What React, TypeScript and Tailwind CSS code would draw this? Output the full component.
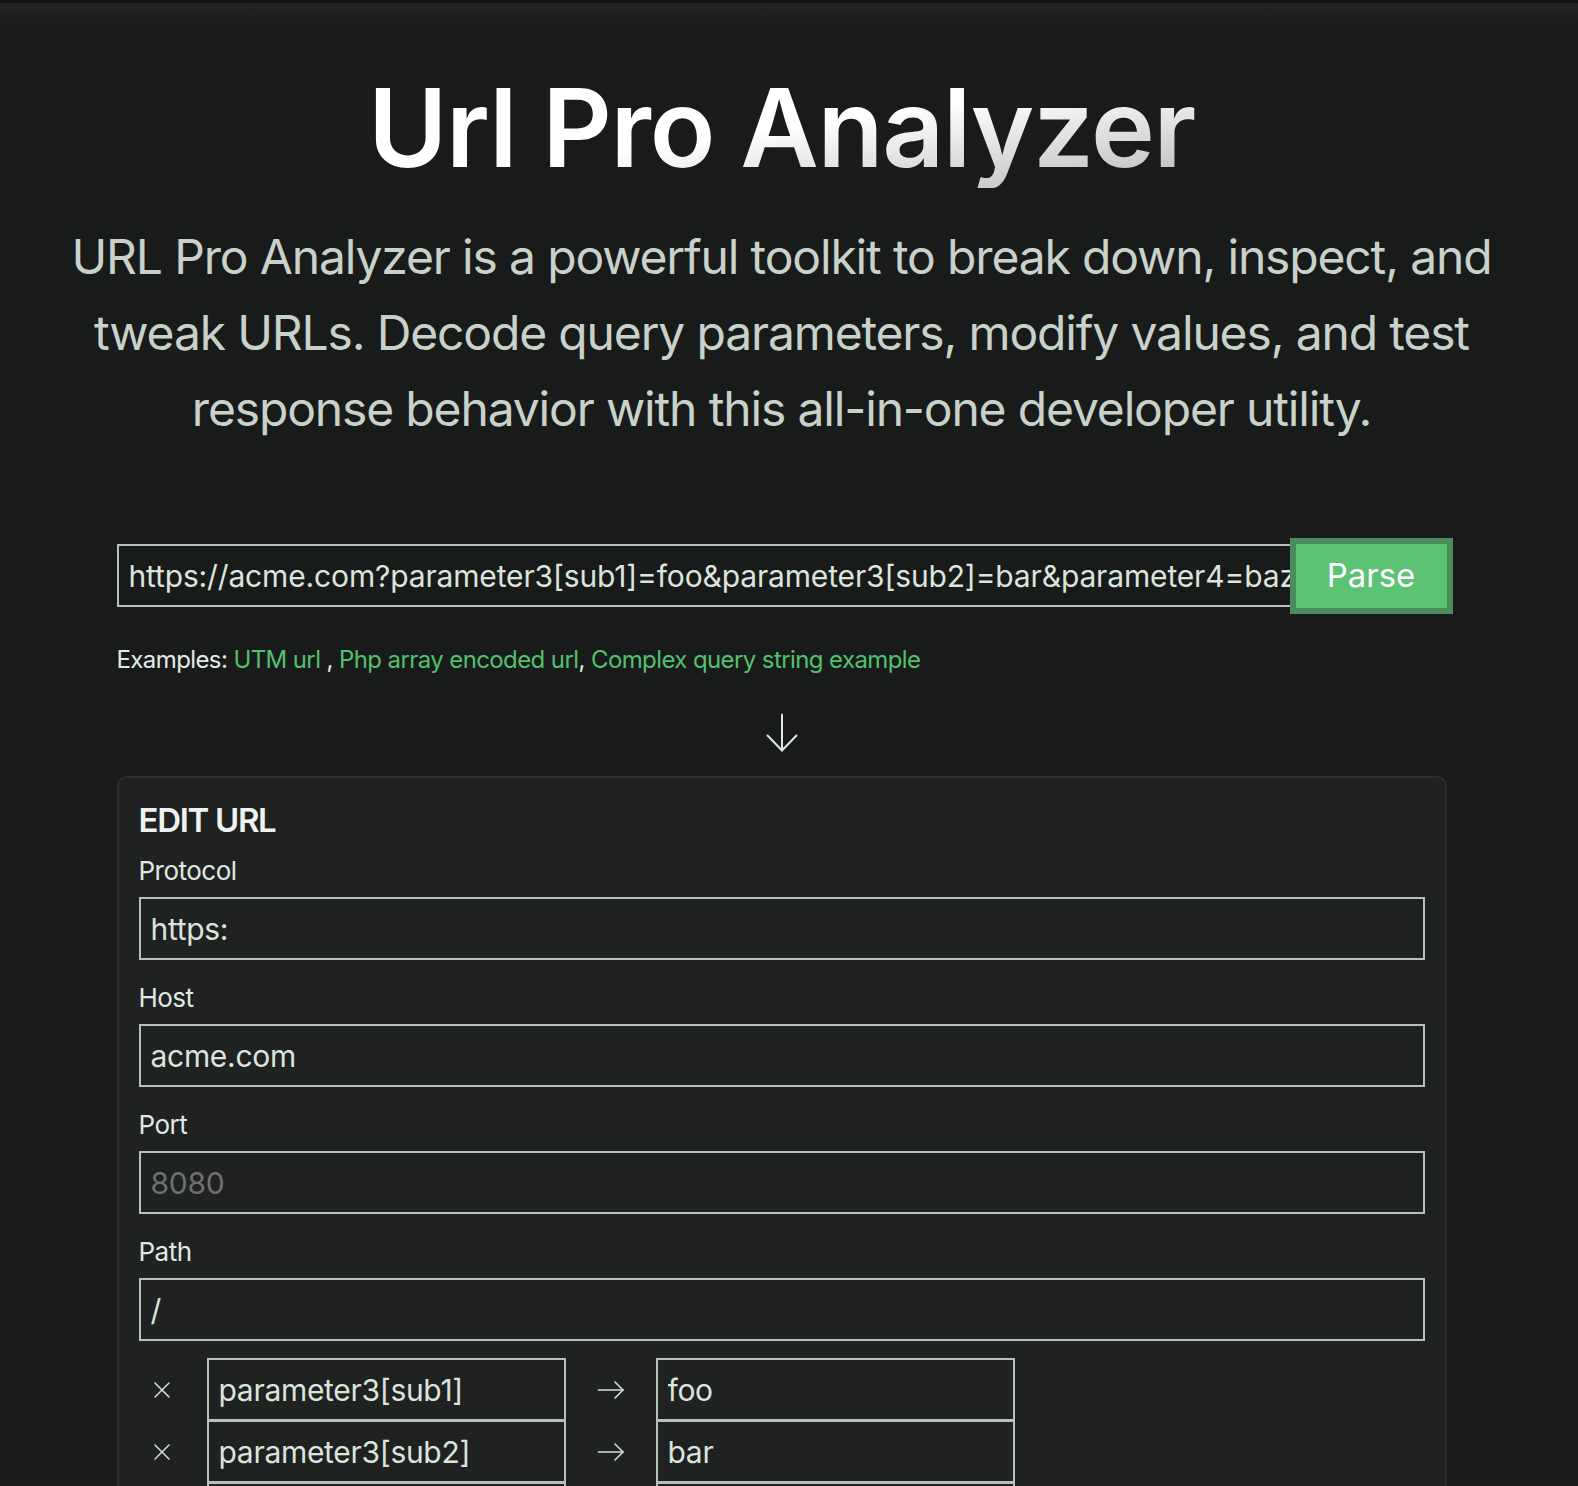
import React from "react";

const FONT = "font-['Inter','Noto_Sans',sans-serif]";

const params = [
  { key: "parameter3[sub1]", value: "foo" },
  { key: "parameter3[sub2]", value: "bar" },
  { key: "parameter4", value: "baz" },
];

const fields = [
  { label: "Protocol", value: "https:" },
  { label: "Host", value: "acme.com" },
  { label: "Port", value: "", placeholder: "8080" },
  { label: "Path", value: "/" },
];

const inputCls =
  "h-[63px] w-full border-2 border-[#b4c3b7] bg-transparent px-[10px] text-[30px] text-[#dbe5dd] outline-none placeholder:text-[#6d716e] tracking-[-0.01em]";

function ArrowDownIcon() {
  return (
    <svg viewBox="0 0 32 40" className="h-[40px] w-[32px]" fill="none" stroke="#dfe6e0" strokeWidth="2" strokeLinecap="round" strokeLinejoin="round">
      <path d="M16 1.5V37.5" />
      <path d="M1.5 22.5L16 37.5L30.5 22.5" />
    </svg>
  );
}

function ArrowRightIcon() {
  return (
    <svg viewBox="0 0 28 20" className="h-[20px] w-[28px]" fill="none" stroke="#d6dfd8" strokeWidth="1.6" strokeLinecap="round" strokeLinejoin="round">
      <path d="M1.5 10H26" />
      <path d="M18 2L26 10L18 18" />
    </svg>
  );
}

function XIcon() {
  return (
    <svg viewBox="0 0 18 18" className="h-[18px] w-[18px]" fill="none" stroke="#d6dfd8" strokeWidth="1.5" strokeLinecap="round">
      <path d="M2 2L16 16" />
      <path d="M16 2L2 16" />
    </svg>
  );
}

export default function App() {
  return (
    <div
      className={`${FONT} min-h-screen border-t-[3px] border-[#131514] bg-[#191b1a] bg-[linear-gradient(to_bottom,#212423_0px,#191b1a_26px)] pr-[15px] text-[#dbe5dd]`}
    >
      <div className="flex flex-col items-center pt-[65px]">
        <h1 className="bg-linear-to-br from-white via-white to-[#b9b9b9] bg-clip-text text-[108px] leading-[120px] font-semibold tracking-[-0.012em] text-transparent">
          Url Pro Analyzer
        </h1>
        <p className="mt-[31px] text-center text-[48px] leading-[76px] tracking-[-0.024em] text-[#c8d2ca]">
          URL Pro Analyzer is a powerful toolkit to break down, inspect, and
          <br />
          tweak URLs. Decode query parameters, modify values, and test
          <br />
          response behavior with this all-in-one developer utility.
        </p>
      </div>

      <div className="mx-auto w-[1330px]">
        <div className="mt-[97px] flex">
          <input
            className="h-[63px] flex-1 border-2 border-[#b4c3b7] bg-transparent pl-[10px] text-[30px] tracking-[-0.005em] text-[#dbe5dd] outline-none"
            defaultValue="https://acme.com?parameter3[sub1]=foo&parameter3[sub2]=bar&parameter4=baz"
          />
          <button className="h-[64px] w-[151px] bg-[#5cc274] text-[33px] text-white outline-[6px] outline-solid outline-[#4a8c5a]">
            Parse
          </button>
        </div>

        <div className="mt-[36px] text-[24px] leading-[32px] tracking-[-0.025em] text-[#e4ebe6]">
          Examples: <span className="text-[#52c06c]">UTM url</span> ,{" "}
          <span className="text-[#52c06c]">Php array encoded url</span>,{" "}
          <span className="text-[#52c06c]">Complex query string example</span>
        </div>

        <div className="mt-[37px] flex justify-center">
          <ArrowDownIcon />
        </div>

        <div className="mt-[23px] rounded-[10px] border-2 border-[#2c2f2e] bg-[#1f2221] px-[20px] pt-[22px] pb-[30px]">
          <h2 className="text-[33px] leading-[40px] font-semibold tracking-[-0.04em] text-[#eef3ef]">EDIT URL</h2>

          <div className="mt-[13px] flex flex-col gap-[20px]">
            {fields.map((f) => (
              <div key={f.label} className="flex flex-col">
                <label className="text-[26px] leading-[36px] tracking-[-0.02em] text-[#e1e8e3]">{f.label}</label>
                <input className={`mt-[8px] ${inputCls}`} defaultValue={f.value} placeholder={f.placeholder} />
              </div>
            ))}
          </div>

          <div className="mt-[17px] flex flex-col">
            {params.map((p, i) => (
              <div key={p.key} className={`flex items-center ${i > 0 ? "-mt-[1px]" : ""}`}>
                <button className="flex w-[46px] justify-center">
                  <XIcon />
                </button>
                <input
                  className="ml-[22px] h-[63px] w-[359px] border-2 border-[#b4c3b7] bg-transparent px-[10px] text-[30px] tracking-[-0.01em] text-[#dbe5dd] outline-none"
                  defaultValue={p.key}
                />
                <div className="flex w-[90px] justify-center">
                  <ArrowRightIcon />
                </div>
                <input
                  className="h-[63px] w-[359px] border-2 border-[#b4c3b7] bg-transparent px-[10px] text-[30px] tracking-[-0.01em] text-[#dbe5dd] outline-none"
                  defaultValue={p.value}
                />
              </div>
            ))}
          </div>
        </div>
      </div>
    </div>
  );
}
